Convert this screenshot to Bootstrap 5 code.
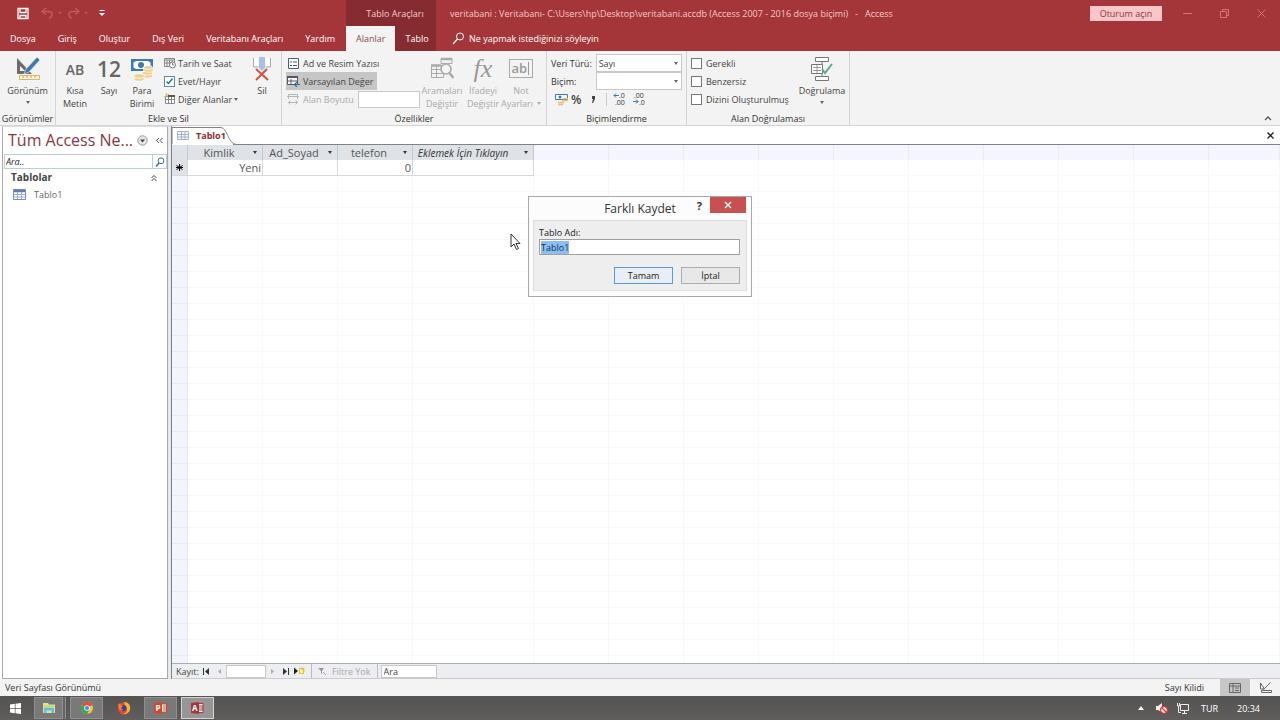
<!DOCTYPE html>
<html lang="tr">
<head>
<meta charset="utf-8">
<meta name="viewport" content="width=device-width, initial-scale=1">
<title>veritabani - Access</title>
<link href="https://cdn.jsdelivr.net/npm/bootstrap@5.3.0/dist/css/bootstrap.min.css" rel="stylesheet">
<style>
  :root { --brand:#a43539; --brand-dark:#862b2f; --ink:#444; --line:#d4d4d4; }
  body { font:9px/13px "Open Sans","Noto Sans",sans-serif; color:var(--ink); background:#fff; }
  button, input, select { font:inherit; color:inherit; line-height:13px; }
  button { background:none; border:0; padding:0; }
  svg { display:block; flex:none; }
  a { color:inherit; text-decoration:none; }

  /* title bar and tabs */
  .top-area { background:var(--brand); color:#fff; }
  .bar-title { height:26px; color:#f6c9cb; }
  .bar-title .caption { padding-left:14px; }
  .caption span { margin:0 7px; }
  .bar-tabs { height:25px; }
  .lead-zone { width:346px; }
  .ctx-zone { width:90px; background:var(--brand-dark); align-self:stretch; }
  .bar-tabs .lead-zone { gap:2px; }
  .tab-link { padding:0 10px; }
  .bar-tabs .ctx-zone .tab-link { height:100%; display:flex; align-items:center; }
  .bar-tabs .ctx-zone .is-open { width:50px; background:#f3f3f3; color:#8f4a4e; }
  .signin { width:72px; height:15px; background:#f9c6ca; color:#8a3a3f; margin-right:7px; }
  .win-btn { width:37px; display:flex; justify-content:center; color:#d0787b; }

  /* ribbon */
  .ribbon { background:#f3f3f3; border-bottom:1px solid var(--line); height:75px; }
  .rb-group { border-right:1px solid var(--line); }
  .rb-label { color:#333; }
  .rb-body { height:61px; }
  .big { padding-top:6px; display:flex; flex-direction:column; align-items:center; text-align:center; white-space:nowrap; }
  .big .pic { height:24px; margin-bottom:3px; display:flex; align-items:center; justify-content:center; }
  .pic.letters { font-size:14px; font-weight:600; color:#666; }
  .pic.digits { font-size:21px; font-weight:600; color:#666; }
  .pic.formula { font:italic 26px "Liberation Serif",serif; color:#999; }
  .w-s { width:30px; } .w-p { width:36px; } .w-m { width:38px; } .w-l { width:44px; } .w-xl { width:54px; }
  .faded { color:#a9a9a9; }
  .faded .caret { border-top-color:#aaa; }
  .stack { padding-top:3px; }
  .stack > * { height:18px; display:flex; align-items:center; white-space:nowrap; gap:2px; }
  .stack.roomy > * { gap:4px; }
  .pressed { background:#c6c6c6; }
  .caret { width:0; height:0; border:2px solid transparent; border-top:3px solid #666; border-bottom:0; flex:none; }
  .box-in { border:1px solid #c8c8c8; background:#fff; padding:0 2px; border-radius:0; outline:0; min-width:0; }
  .size-in { width:62px; height:17px; }
  .pick { position:relative; width:87px; height:18px; margin-left:auto; }
  .pick select { appearance:none; width:100%; height:100%; }
  .pick .caret { position:absolute; right:4px; top:8px; pointer-events:none; }
  .form-lab { width:45px; color:#333; }
  .percent { font-size:12px; font-weight:600; }
  .rule { border-left:1px solid #ccc; height:13px; }
  .tick { appearance:none; width:11px; height:11px; margin:0; border:1px solid #777; background:#fff; flex:none; }
  .tick:checked { border-color:#5c87ad; }
  .tick-wrap { position:relative; display:flex; width:12px; }
  .tick-wrap svg { position:absolute; left:1px; top:1px; pointer-events:none; }

  /* navigation pane */
  .pane { width:166px; margin-left:2px; border:1px solid #a9a9a9; border-top-color:#ddd; }
  .pane-head { padding:2px 4px 2px 5px; }
  .pane-title { font-size:16px; line-height:22px; color:#8d353b; }
  .pane-find { height:15px; margin:1px 0 0 1px; border:1px solid #bcd0cc; }
  .pane-find input { border:0; outline:0; font-style:italic; padding:0 1px; color:#222; min-width:0; }
  .pane-find input::placeholder { color:#222; opacity:1; }
  .pane-find button { width:14px; border-left:1px solid #bcd0cc; display:flex; justify-content:center; align-items:center; }
  .grp-head { font-size:10px; font-weight:700; padding:2px 9px 2px 8px; }
  .pane-item { padding:2px 10px; color:#666; }
  .gutter { width:4px; background:#e6e8ee; border-right:1px solid #7f8388; }

  /* document */
  .doc-tabs { height:19px; border-bottom:1px solid #7f8388; }
  .doc-tab { width:70px; height:19px; position:relative; padding-left:5px; gap:7px; }
  .doc-tab > svg:first-child { position:absolute; left:0; top:0; }
  .doc-tab b { color:#8b2b30; position:relative; }
  .doc-tab .ico { position:relative; }
  .sheet { width:100%; height:100%; table-layout:fixed; border-collapse:separate; border-spacing:0; font-size:11px; line-height:14px; color:#555; }
  .sheet th, .sheet td { padding:0 1px; border-right:1px solid #f8f8fb; white-space:nowrap; overflow:hidden; font-weight:400; }
  .sheet th { height:15px; background:#f4f5fe; border-right-color:#e9ebf4; }
  .sheet th.real { background:#dfe2e7; border-right-color:#c3c7ce; }
  .sheet thead i { font-size:10px; color:#333; }
  .sheet .rec td { height:16px; border-bottom:1px solid #fafafa; }
  .sheet .rec .real { border-bottom-color:#d5d8dd; border-right-color:#d5d8dd; text-align:right; }
  .sheet .rec .real.sel { background:#dfe2e7; color:#000; }
  .sheet .fill td { background:repeating-linear-gradient(#fff 0 15px,#f9f9fb 15px 16px); }
  .sheet .fill td.sel { background:repeating-linear-gradient(#f3f5fe 0 15px,#e8eaf6 15px 16px); border-right-color:#e8eaf6; }
  .hcell { display:flex; align-items:center; }
  .hcell span:first-child { flex:1; text-align:center; padding-right:4px; }
  .hcell .caret { border-top-color:#333; margin-right:4px; }
  .hcell.hint span:first-child { padding-right:12px; }

  .rec-bar { height:16px; border-top:1px solid #a9acb2; background:#eceef1; border-bottom:1px solid #ccc; }
  .rec-bar .box-in { height:13px; }
  .rec-bar .go { margin:0 3px; }
  .rec-bar .rec-no { width:40px; }
  .rec-find { width:56px; }
  .rec-bar .go.new { margin:0 1px; }
  .rec-bar .part { border-left:1px solid #b9bcc2; height:14px; padding:0 6px; gap:6px; }
  .rec-bar .part.last { padding:0 0 0 3px; }

  .status { height:17px; background:#f3f3f3; color:#333; padding-left:5px; }
  .view-btn { width:30px; height:17px; display:flex; align-items:center; justify-content:center; }
  .taskbar { height:24px; background:linear-gradient(#555252,#605e5d); color:#fff; }
  .task { height:22px; width:33px; display:flex; align-items:center; justify-content:center; }
  .task.start { width:30px; }
  .task.run { border:1px solid #8f8f8f; background:#7a7979; }
  .task.multi { width:29px; margin-right:3px; box-shadow:2px 0 0 #666464, 3px 0 0 #8f8f8f; }
  .task.now { border-color:#d4d4d4; background:#979696; }
  .clock { padding:0 20px 0 3px; }

  /* dialog */
  .save-as { position:absolute; top:196px; left:50%; transform:translateX(-50%); width:224px; background:#fcfcfc; border:1px solid #a8a8a8; padding:0 4px 5px; color:#222; }
  .save-as header { height:23px; font-size:12px; color:#333; position:relative; }
  .save-as .ctl { position:absolute; top:0; right:1px; display:flex; gap:8px; }
  .save-as .help { font-size:11px; font-weight:700; }
  .save-as .shut { width:36px; height:16px; background:#c75050; display:flex; align-items:center; justify-content:center; }
  .save-as form { background:#eee; border:1px solid #ddd; padding:5px 6px 6px 5px; }
  .save-as input { display:block; width:100%; height:16px; border:1px solid #a0a0a0; padding:0 1px; outline:0; color:#123; }
  .save-as input::selection { background:#8dbdf2; color:#0b3560; }
  .push { width:59px; height:17px; border:1px solid #acacac; background:#e8e8e8; }
  .push.main { border-color:#5b9bd0; background:#e8eef3; }
  .pointer { position:absolute; left:510px; top:233px; pointer-events:none; }
</style>
</head>
<body>
<div class="d-flex flex-column min-vh-100 position-relative">

<header class="top-area">
  <div class="bar-title d-flex align-items-center">
    <div class="lead-zone d-flex align-items-center">
      <button class="ms-3 me-2" aria-label="Kaydet"><svg width="13" height="13"><path d="M2 1.500h10v10h-10z M4 2v3.500h6V2 M4 11.500v-3h6v3" fill="none" stroke="#fff" stroke-width="1.300"/></svg></button>
      <button class="ms-1" aria-label="Geri al"><svg width="22" height="12"><path d="M5 1L1 4.500 5 7.500M1 4.500h7c4 0 4 6 0 6.500" fill="none" stroke="#bd5c60" stroke-width="1.400"/><path d="M17 5h4l-2 2z" fill="#bd5c60"/></svg></button>
      <button class="ms-1" aria-label="Yinele"><svg width="22" height="12"><path d="M8 1l4 3.500L8 7.500M12 4.500H5c-4 0-4 6 0 6.500" fill="none" stroke="#bd5c60" stroke-width="1.400"/><path d="M17 5h4l-2 2z" fill="#bd5c60"/></svg></button>
      <button class="ms-2" aria-label="Özelleştir"><svg width="10" height="8"><path d="M2.500 1.500h5" stroke="#fff"/><path d="M2 4h6L5 7z" fill="#fff"/></svg></button>
    </div>
    <div class="ctx-zone d-flex align-items-center justify-content-center ps-2">Tablo Araçları</div>
    <div class="caption flex-grow-1 text-nowrap">veritabani : Veritabanı- C:\Users\hp\Desktop\veritabani.accdb (Access 2007 - 2016 dosya biçimi)<span>-</span>Access</div>
    <button class="signin">Oturum açın</button>
    <button class="win-btn" aria-label="Simge durumu"><svg width="9" height="9"><path d="M0 4.500h9" stroke="currentColor"/></svg></button>
    <button class="win-btn" aria-label="Geri yükle"><svg width="9" height="9"><path d="M.5 2.500h6v6h-6zM2.500 2.500v-2h6v6h-2" fill="none" stroke="currentColor"/></svg></button>
    <button class="win-btn" aria-label="Kapat"><svg width="9" height="9"><path d="M.5.500l8 8M8.500.500l-8 8" stroke="currentColor"/></svg></button>
  </div>
  <nav class="bar-tabs d-flex align-items-center text-nowrap">
    <div class="lead-zone d-flex">
      <a class="tab-link" href="#">Dosya</a><a class="tab-link" href="#">Giriş</a><a class="tab-link" href="#">Oluştur</a><a class="tab-link" href="#">Dış Veri</a><a class="tab-link" href="#">Veritabanı Araçları</a><a class="tab-link" href="#">Yardım</a>
    </div>
    <div class="ctx-zone d-flex"><a class="tab-link is-open" href="#">Alanlar</a><a class="tab-link" href="#">Tablo</a></div>
    <a class="d-flex align-items-center gap-1 ms-3" href="#"><svg width="13" height="13"><circle cx="8" cy="4.500" r="3.500" fill="none" stroke="#fff"/><path d="M5.500 7L1 12" stroke="#fff" stroke-width="1.200"/></svg>Ne yapmak istediğinizi söyleyin</a>
  </nav>
</header>

<section class="ribbon d-flex">
  <div class="rb-group d-flex flex-column align-items-center" style="width:56px">
    <div class="rb-body"><button class="big w-xl"><span class="pic"><svg width="26" height="26"><path d="M2 2v16h15z" fill="#6c6c6c"/><path d="M5 10v5h5z" fill="#f3f3f3"/><path d="M22 1l3 3-11 12-5 2 2-5z" fill="#3f79b5" stroke="#f3f3f3" stroke-width=".6"/><path d="M4.500 19.500h20v4h-20z" fill="#fff6dc" stroke="#d9b46c"/><path d="M8 20v2M12 20v2M16 20v2M20 20v2" stroke="#c9a050"/></svg></span>Görünüm<span class="caret mt-1"></span></button></div>
    <span class="rb-label">Görünümler</span>
  </div>

  <div class="rb-group d-flex flex-column align-items-center" style="width:226px">
    <div class="rb-body d-flex w-100">
      <button class="big w-m"><span class="pic letters">AB</span>Kısa<br>Metin</button>
      <button class="big w-s"><span class="pic digits">12</span>Sayı</button>
      <button class="big w-p"><span class="pic"><svg width="24" height="25"><path d="M1 2h22v12H1z" fill="#3f79b5"/><path d="M3.500 5.500L6 4h12l2.500 1.500v5L18 12H6l-2.500-1.500z" fill="#fff"/><circle cx="11" cy="8" r="3" fill="#3f79b5"/><g fill="#eecf94" stroke="#fff" stroke-width=".7"><ellipse cx="17.500" cy="19" rx="5.500" ry="2.200"/><ellipse cx="17.500" cy="16" rx="5.500" ry="2.200"/><ellipse cx="18.500" cy="13" rx="5" ry="2.200"/><ellipse cx="18" cy="10.500" rx="4.500" ry="2"/><ellipse cx="9" cy="22" rx="5.500" ry="2.200"/><ellipse cx="9" cy="19" rx="5.500" ry="2.200"/></g></svg></span>Para<br>Birimi</button>
      <div class="stack flex-grow-1 ps-1 me-1" style="width:78px">
        <button><svg width="12" height="12"><path d="M.5 1.500h10v8H.5zM.5 3h10M3 3v6M5.500 3v6M8 3v6M.5 6h10" fill="none" stroke="#888"/><circle cx="8.500" cy="8" r="3" fill="#fff" stroke="#777"/><path d="M8.500 6v2H10" fill="none" stroke="#777"/></svg>Tarih ve Saat</button>
        <label for="yn"><span class="tick-wrap"><input class="tick" type="checkbox" id="yn" checked><svg width="9" height="9"><path d="M1.500 4.500l2 2 4-5" fill="none" stroke="#2b6ca8" stroke-width="1.400"/></svg></span>Evet/Hayır</label>
        <button><svg width="12" height="12"><path d="M1.500 3.500h9v7h-9zM1.500 6.500h9M4.500 4v7M7.500 4v7" fill="#fff" stroke="#888"/><path d="M4 3h7" stroke="#555" stroke-width="2"/><path d="M2 0l1 4M5 1L0 4" stroke="#e2b04a"/></svg>Diğer Alanlar<span class="caret"></span></button>
      </div>
      <button class="big w-m"><span class="pic"><svg width="20" height="24"><path d="M1.500 1v9h5M18.500 1v9h-5" fill="none" stroke="#aaa"/><path d="M2 1h4v8H2zM14 1h4v8h-4z" fill="#fff"/><path d="M7 0h6v11l-3 3-3-3z" fill="#a6c1e3"/><path d="M4 12l12 11M15 12L4 23" stroke="#cf5339" stroke-width="2"/></svg></span>Sil</button>
    </div>
    <span class="rb-label">Ekle ve Sil</span>
  </div>

  <div class="rb-group d-flex flex-column align-items-center" style="width:265px">
    <div class="rb-body d-flex w-100">
      <div class="stack ms-1" style="width:134px">
        <button><svg width="15" height="11"><path d="M2.500.500h10v10h-10z" fill="#fff" stroke="#4a6076"/><path d="M4 4h2M4 7.500h2M7 4h4M7 7.500h4" stroke="#456" stroke-width="1.200"/></svg>Ad ve Resim Yazısı</button>
        <button class="pressed pe-1"><svg width="15" height="12"><path d="M1.500 1.500h10v8h-10zM1.500 6h10M5 4v5" fill="#fff" stroke="#556"/><path d="M1 2h11" stroke="#556" stroke-width="2"/><path d="M14 9.500H9M11 7L8.500 9.500 11 12" fill="none" stroke="#2b6ca8" stroke-width="1.200"/></svg>Varsayılan Değer</button>
        <div class="faded"><svg width="15" height="13"><path d="M2.500 6V1.500h9V6M1 3.500h12M2 9.500h10M4.500 7.500l-2 2 2 2M9.500 7.500l2 2-2 2" fill="none" stroke="#b5b5b5"/></svg><label for="bsize">Alan Boyutu</label><input id="bsize" class="box-in size-in ms-auto"></div>
      </div>
      <button class="big w-l faded"><span class="pic"><svg width="24" height="24"><path d="M11 1.500h11v5H11zM1.500 8.500h12v12h-12zM1.500 12.500h11M1.500 16.500h11M6.500 8v12" fill="none" stroke="#aaa"/><path d="M11 2h11M1 8.500h10" stroke="#aaa" stroke-width="2.500"/><circle cx="16" cy="12" r="5" fill="#f5f5f5" stroke="#aaa" stroke-width="1.600"/><path d="M19.500 16l4 5" stroke="#aaa" stroke-width="2.500"/></svg></span>Aramaları<br>Değiştir</button>
      <button class="big w-m faded"><span class="pic formula">fx</span>İfadeyi<br>Değiştir</button>
      <button class="big w-m faded"><span class="pic"><svg width="24" height="20"><rect x=".5" y=".5" width="23" height="18" fill="none" stroke="#aaa"/><text x="2.500" y="14" font-size="13" font-weight="600" fill="#999">ab</text><path d="M19.500 3v13" stroke="#999"/></svg></span>Not<br><span class="d-flex align-items-center gap-1">Ayarları<span class="caret"></span></span></button>
    </div>
    <span class="rb-label">Özellikler</span>
  </div>

  <div class="rb-group d-flex flex-column align-items-center" style="width:140px">
    <div class="rb-body w-100 stack ps-1 pe-1">
      <div class="gap-0"><label class="form-lab" for="dtype">Veri Türü:</label><span class="pick"><select class="box-in" id="dtype"><option>Sayı</option></select><span class="caret"></span></span></div>
      <div class="gap-0"><label class="form-lab" for="fmt">Biçim:</label><span class="pick"><select class="box-in" id="fmt"><option></option></select><span class="caret"></span></span></div>
      <div>
        <button aria-label="Para birimi" class="ms-1"><svg width="14" height="13"><path d="M.5 1.500h12v5H.5z" fill="#fff" stroke="#3f79b5"/><circle cx="5" cy="4" r="1.500" fill="#3f79b5"/><path d="M8 5.500h5M7 7.500h6M3 9.500h6M3 11.500h5" stroke="#e5be78" stroke-width="1.600"/></svg></button>
        <button class="percent">%</button>
        <button class="ms-2 me-2" aria-label="Binlik"><svg width="5" height="9"><path d="M1 1h3v3L2 8H1l1-4H1z" fill="#444"/></svg></button>
        <span class="rule"></span>
        <button aria-label="Ondalık artır" class="ms-1"><svg width="14" height="14"><path d="M6 3.500H1M3 1.500l-2 2 2 2" fill="none" stroke="#3f79b5"/><text x="6" y="6" font-size="7" fill="#333">.0</text><text x="2" y="13" font-size="7" fill="#333">.00</text></svg></button>
        <button aria-label="Ondalık azalt" class="ms-1"><svg width="14" height="14"><text x="1" y="6" font-size="7" fill="#333">.00</text><path d="M0 9.500h5M3 7.500l2 2-2 2" fill="none" stroke="#3f79b5"/><text x="6" y="13" font-size="7" fill="#333">.0</text></svg></button>
      </div>
    </div>
    <span class="rb-label">Biçimlendirme</span>
  </div>

  <div class="rb-group d-flex flex-column align-items-center" style="width:163px">
    <div class="rb-body d-flex w-100 justify-content-between">
      <div class="stack roomy ms-1">
        <label><input class="tick" type="checkbox">Gerekli</label>
        <label><input class="tick" type="checkbox">Benzersiz</label>
        <label><input class="tick" type="checkbox">Dizini Oluşturulmuş</label>
      </div>
      <button class="big w-xl"><span class="pic"><svg width="24" height="24"><path d="M5.500.500h13v4h-13zM5.500 19.500h13v4h-13zM12 4v3M12 17v3M1.500 7.500h11v9h-11z" fill="#fff" stroke="#777"/><path d="M3 10.500h8M3 13.500h8M7 8v8" stroke="#999"/><path d="M12 12l3 4 7-9" fill="none" stroke="#5fa98a" stroke-width="2"/></svg></span>Doğrulama<span class="caret mt-1"></span></button>
    </div>
    <span class="rb-label">Alan Doğrulaması</span>
  </div>
  <button class="ms-auto mt-auto mb-1 me-2" aria-label="Şeridi daralt"><svg width="8" height="6"><path d="M1 5l3-3 3 3" fill="none" stroke="#555" stroke-width="1.300"/></svg></button>
</section>

<main class="flex-grow-1 d-flex">
  <aside class="pane flex-shrink-0">
    <div class="pane-head d-flex align-items-center"><span class="pane-title flex-grow-1 text-nowrap">Tüm Access Ne...</span>
      <button class="me-2" aria-label="Menü"><svg width="11" height="11"><circle cx="5.500" cy="5.500" r="4.700" fill="#e5e7ea" stroke="#999"/><path d="M3 4.500h5l-2.500 3z" fill="#444"/></svg></button>
      <button aria-label="Daralt"><svg width="7" height="7"><path d="M3 1l-2.500 2.500L3 6M6.500 1L4 3.500 6.500 6" fill="none" stroke="#555"/></svg></button></div>
    <div class="pane-find d-flex"><input class="flex-grow-1" placeholder="Ara.." aria-label="Ara"><button aria-label="Bul"><svg width="10" height="10"><circle cx="6" cy="3.800" r="2.900" fill="#fff" stroke="#3b6c94"/><path d="M4 6L1 9.500" stroke="#3b6c94" stroke-width="1.500"/></svg></button></div>
    <div class="grp-head d-flex align-items-center justify-content-between"><span>Tablolar</span><svg width="8" height="8"><path d="M1.500 4L4 1.500 6.500 4M1.500 7L4 4.500 6.500 7" fill="none" stroke="#444"/></svg></div>
    <a class="pane-item d-flex align-items-center gap-2" href="#"><svg width="13" height="11"><path d="M.5.500h12v10H.5z" fill="#fff" stroke="#7b8dbb"/><path d="M1 2h11" stroke="#6578b0" stroke-width="2.500"/><path d="M4.500 3v7M8.500 3v7M1 5.500h11M1 8h11" stroke="#9dabd0"/></svg>Tablo1</a>
  </aside>
  <div class="gutter flex-shrink-0"></div>

  <div class="flex-grow-1 d-flex flex-column overflow-hidden">
    <div class="doc-tabs d-flex align-items-center justify-content-between">
      <div class="doc-tab d-flex align-items-center"><svg width="66" height="19"><path d="M0 19V1.500h49c6 0 7 16 15 17z" fill="#fff" stroke="#7f8388"/><path d="M0 18.500h61" stroke="#fff"/></svg><svg class="ico" width="12" height="9"><path d="M.5.500h11v8H.5zM1 3.500h10M1 6h10M4.500 1v7M8 1v7" fill="#f5f7ff" stroke="#a9b2cc"/></svg><b>Tablo1</b></div>
      <button class="me-1" aria-label="Sekmeyi kapat"><svg width="10" height="9"><path d="M1.500 1.500l6 6M7.500 1.500l-6 6" stroke="#222" stroke-width="1.300"/></svg></button>
    </div>
    <div class="flex-grow-1 d-flex">
    <table class="sheet">
      <colgroup><col style="width:16px"><col style="width:75px" span="3"><col style="width:121px"><col style="width:75px" span="9"><col></colgroup>
      <thead><tr>
        <th class="real"></th>
        <th class="real"><div class="hcell"><span>Kimlik</span><span class="caret"></span></div></th>
        <th class="real"><div class="hcell"><span>Ad_Soyad</span><span class="caret"></span></div></th>
        <th class="real"><div class="hcell"><span>telefon</span><span class="caret"></span></div></th>
        <th class="real"><div class="hcell hint"><span><i>Eklemek İçin Tıklayın</i></span><span class="caret"></span></div></th>
        <th></th><th></th><th></th><th></th><th></th><th></th><th></th><th></th><th></th><th></th>
      </tr></thead>
      <tbody>
      <tr class="rec"><td class="real sel"><svg width="9" height="9" class="mx-auto"><path d="M4.500 1v7M1.500 2.500l6 4M7.500 2.500l-6 4M1 4.500h7" stroke="#000"/></svg></td><td class="real">Yeni</td><td class="real"></td><td class="real">0</td><td class="real"></td><td></td><td></td><td></td><td></td><td></td><td></td><td></td><td></td><td></td><td></td></tr>
      <tr class="fill"><td class="sel"></td><td></td><td></td><td></td><td></td><td></td><td></td><td></td><td></td><td></td><td></td><td></td><td></td><td></td><td></td></tr>
      </tbody>
    </table>
    </div>
    <div class="rec-bar d-flex align-items-center">
      <label class="ps-1" for="recno">Kayıt:</label>
      <button class="go" aria-label="İlk kayıt"><svg width="8" height="7"><path d="M1.500 0v7" stroke="#333"/><path d="M7 0v7L3 3.500z" fill="#333"/></svg></button>
      <button class="go" aria-label="Önceki kayıt"><svg width="7" height="7"><path d="M5 1v5L2 3.500z" fill="#aaa"/></svg></button>
      <input class="box-in rec-no" id="recno">
      <button class="go" aria-label="Sonraki kayıt"><svg width="7" height="7"><path d="M2 1v5l3-2.500z" fill="#aaa"/></svg></button>
      <button class="go" aria-label="Son kayıt"><svg width="8" height="7"><path d="M6.500 0v7" stroke="#333"/><path d="M1 0v7l4-3.500z" fill="#333"/></svg></button>
      <button class="go new" aria-label="Yeni kayıt"><svg width="12" height="8"><path d="M0 .5v7L4 4z" fill="#222"/><path d="M5.500 1.500h4v5h-4z" fill="#fff4a0" stroke="#d9c23a"/><path d="M8 0v3M10.500 1l-2 2M11 4H9" stroke="#d9c23a"/></svg></button>
      <button class="part d-flex align-items-center faded ms-1" disabled><svg width="8" height="8"><path d="M0 1h6L4 4v3L3 6V4z" fill="#999"/><path d="M5 5l3 3" stroke="#aaa"/></svg>Filtre Yok</button>
      <span class="part last d-flex align-items-center"><input class="box-in rec-find" value="Ara" aria-label="Kayıtlarda ara"></span>
    </div>
  </div>
</main>

<footer class="status d-flex align-items-center">
  <span class="flex-grow-1">Veri Sayfası Görünümü</span><span class="pe-3">Sayı Kilidi</span>
  <button class="view-btn pressed" aria-label="Veri sayfası"><svg width="12" height="10"><path d="M.5.500h11v9H.5zM.5 3h11M4 .5v9M6 5h4M6 7.500h4" fill="none" stroke="#666"/></svg></button>
  <button class="view-btn" aria-label="Tasarım"><svg width="13" height="11"><path d="M1.500 1v6h4zM11.500.500l-6 6-2 .8M2.500 8.500h10v2h-10z" fill="none" stroke="#666"/></svg></button>
</footer>

<footer class="taskbar d-flex align-items-center justify-content-between">
  <div class="d-flex align-items-center gap-1">
    <button class="task start" aria-label="Başlat"><svg width="11" height="11"><path d="M0 1.500L4.800.800V5.200H0zM5.500.700L11 0v5.200H5.500zM0 5.900h4.800v4.400L0 9.600zM5.500 5.900H11V11l-5.500-.7z" fill="#fff"/></svg></button>
    <button class="task run multi" aria-label="Dosya Gezgini"><svg width="14" height="12"><path d="M1 1h5l1 1.500h6V11H1z" fill="#f1dc8a"/><path d="M2 3h10v3H2z" fill="#b9dd8a"/><path d="M2 11V6h10v5h-2.500V8.500h-5V11z" fill="#5fc0e0"/></svg></button>
    <button class="task run" aria-label="Chrome"><svg width="12" height="12"><circle cx="6" cy="6" r="6" fill="#f3c63c"/><path d="M6 6L.8 3A6 6 0 0 1 11.200 3z" fill="#e04a3a"/><path d="M6 6L.8 3A6 6 0 0 0 6 12l2-3z" fill="#35a853"/><circle cx="6" cy="6" r="2.800" fill="#fff"/><circle cx="6" cy="6" r="2.100" fill="#4285f4"/></svg></button>
    <button class="task" aria-label="Firefox"><svg width="14" height="14"><circle cx="7" cy="7.500" r="6" fill="#e8462f"/><path d="M7 1c5 0 7 4 6 8-1 3-5 5-8 4 6 0 6-6 3-8z" fill="#f8b42c"/><circle cx="6.500" cy="7" r="3" fill="#3b3f9e"/><path d="M1 4l2-2 1 2 2 1-2 2 2 2c-3 1-4-1-4-1z" fill="#f4802a"/></svg></button>
    <button class="task run" aria-label="PowerPoint"><svg width="13" height="12"><path d="M6 2h6.500v8H6z" fill="#fff" stroke="#d2472a"/><path d="M9 4h3M9 6h3M9 8h3" stroke="#d2472a"/><path d="M0 1l8-1v12l-8-1z" fill="#d2472a"/><text x="1.500" y="9" font-size="8" font-weight="700" fill="#fff">P</text></svg></button>
    <button class="task run now" aria-label="Access"><svg width="13" height="12"><path d="M7 1.500h5v9H7z" fill="#fff" stroke="#a4373a"/><path d="M8 4h4M8 6h4M8 8h4" stroke="#a4373a"/><path d="M0 1l8-1v12l-8-1z" fill="#a4373a"/><text x="1" y="9" font-size="8" font-weight="700" fill="#fff">A</text></svg></button>
  </div>
  <div class="d-flex align-items-center">
    <svg class="me-2" width="6" height="4"><path d="M0 4h6L3 0z" fill="#fff"/></svg>
    <svg class="me-2 ms-1" width="12" height="12"><path d="M0 4h2l4-3v9L2 8H0z" fill="#eee"/><circle cx="8" cy="8" r="3.300" fill="#fff" stroke="#d33" stroke-width="1.300"/><path d="M6 6l4 4" stroke="#d33" stroke-width="1.300"/></svg>
    <svg class="me-2" width="13" height="12"><path d="M4.500 2.500h8v6h-8zM6 11.500h5M8.500 9v2M1.500 1v3h2V1M2.500 4v6.500H5" fill="none" stroke="#eee"/></svg>
    <span class="ms-1 me-3">TUR</span><span class="clock">20:34</span>
  </div>
</footer>

<div class="save-as" role="dialog" aria-labelledby="dlg">
  <header class="d-flex align-items-center justify-content-center"><span id="dlg">Farklı Kaydet</span>
    <div class="ctl"><button class="help" aria-label="Yardım">?</button><button class="shut" aria-label="Kapat"><svg width="8" height="8"><path d="M1 1l6 6M7 1L1 7" stroke="#fff" stroke-width="1.400"/></svg></button></div></header>
  <form>
    <label class="d-block" for="tname">Tablo Adı:</label>
    <input id="tname" value="Tablo1" autofocus>
    <div class="d-flex justify-content-end gap-2 mt-2 pt-1"><button type="button" class="push main">Tamam</button><button type="button" class="push">İptal</button></div>
  </form>
</div>
<svg class="pointer" width="11" height="18"><path d="M1 1v13l3-3 2.500 5.500 2-1L6 10.500h4z" fill="#fff" stroke="#333"/></svg>
</div>
<script src="https://cdn.jsdelivr.net/npm/bootstrap@5.3.0/dist/js/bootstrap.bundle.min.js"></script>
<script>document.getElementById('tname').select();</script>
</body>
</html>
